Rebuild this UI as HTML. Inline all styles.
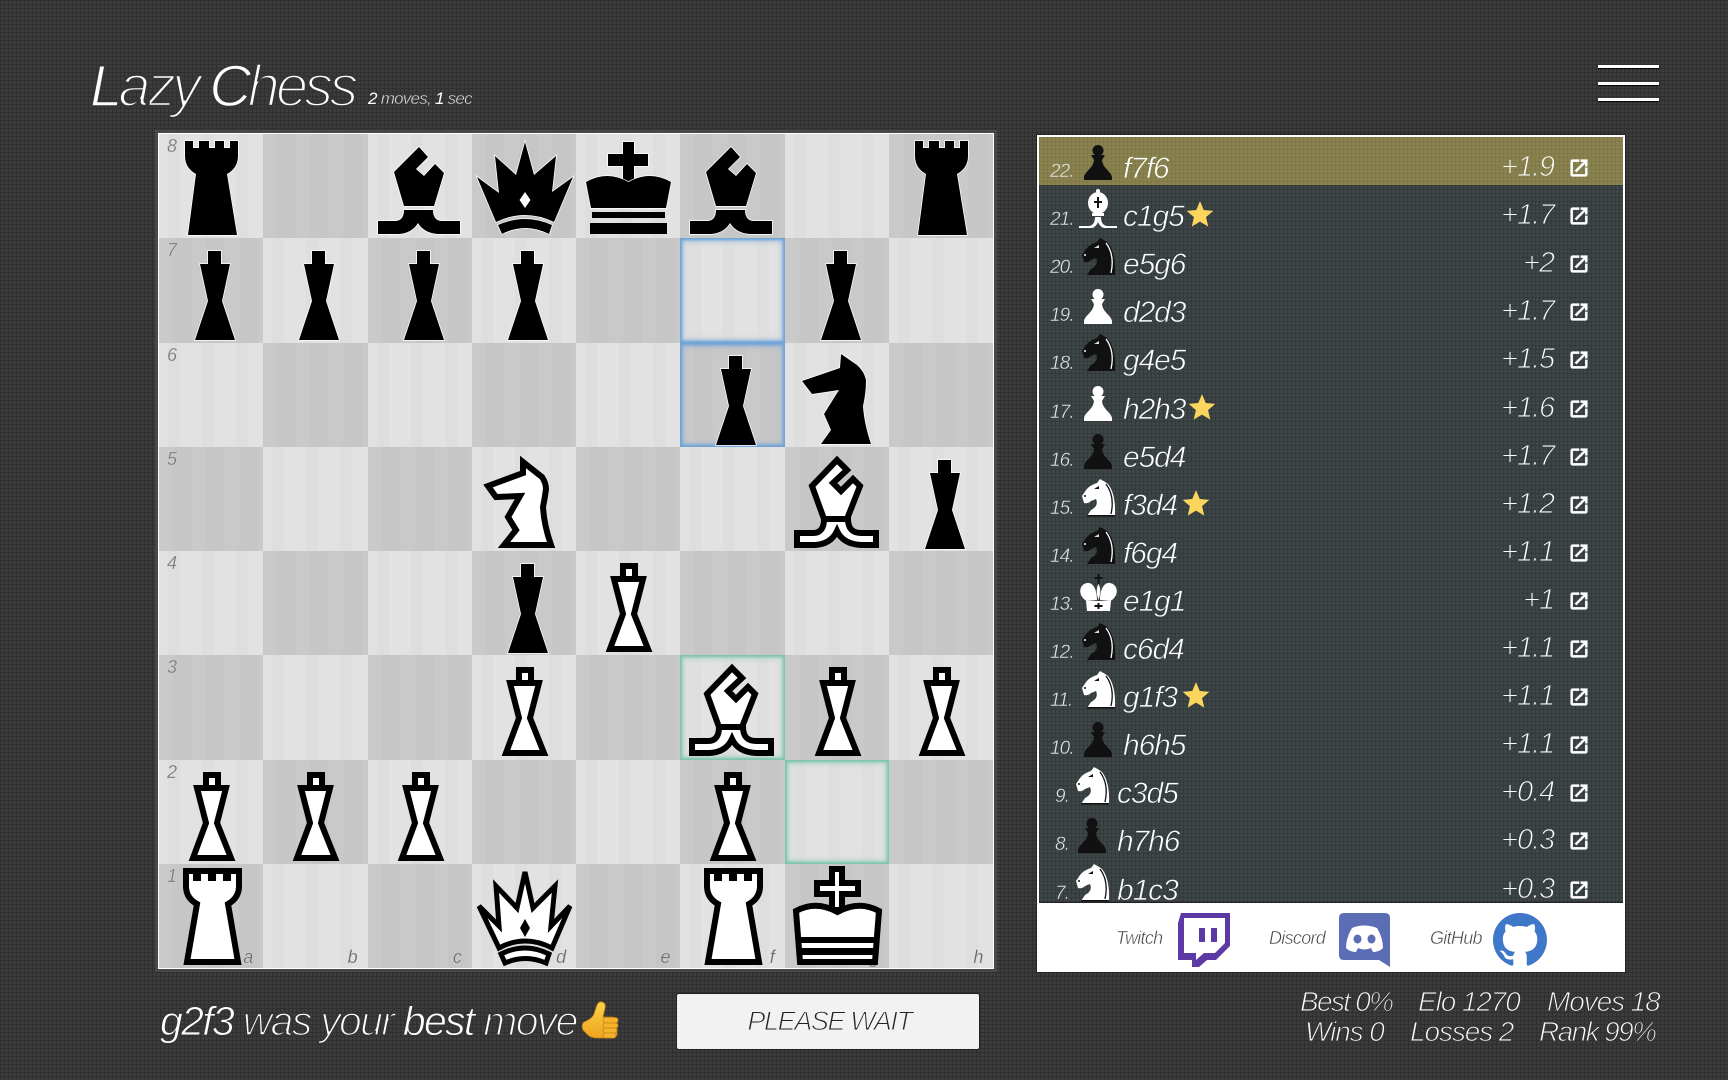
<!DOCTYPE html>
<html lang="en"><head><meta charset="utf-8"><title>Lazy Chess</title>
<style>
html,body{margin:0;padding:0;width:1728px;height:1080px;overflow:hidden}
body{position:relative;background-color:#3c3c3c;background-image:linear-gradient(#2f2f2f 1px,transparent 1px),linear-gradient(90deg,#2f2f2f 1px,transparent 1px);background-size:4px 4px;font-family:"Liberation Sans",sans-serif;font-style:italic;color:#fff}
.a{position:absolute;white-space:nowrap}
.title{left:90px;top:55px;font-size:58px;line-height:64px;letter-spacing:-3.85px;-webkit-text-stroke:2.4px #363636}
.title b{font-weight:normal;-webkit-text-stroke:1.4px #363636}
.sub{left:368px;top:89px;font-size:17px;line-height:20px;letter-spacing:-.75px;color:#ddd;-webkit-text-stroke:.4px #363636}
.sub b{font-weight:normal;color:#fff;-webkit-text-stroke:0}
.bar{left:1598px;width:61px;height:3px;background:#fff;box-shadow:0 1px 1px #000}
#board{left:159px;top:134px;width:834.4px;height:834.4px;display:grid;grid-template-columns:repeat(8,104.3px);grid-template-rows:repeat(8,104.3px);outline:1px solid #fff;box-shadow:0 0 0 4px #484848}
.l,.d{position:relative;overflow:hidden}
.l{background:#e1e1e1 repeating-linear-gradient(90deg,rgba(255,255,255,.04) 0 9px,rgba(0,0,0,.01) 9px 21px,rgba(255,255,255,.02) 21px 34px)}
.d{background:#c8c8c8 repeating-linear-gradient(90deg,rgba(255,255,255,.02) 0 14px,rgba(0,0,0,.01) 14px 33px)}
.hb{box-shadow:inset 0 0 2px 2px #6ea3d8,inset 0 0 6px 3px rgba(110,163,216,.6)}
.ht{box-shadow:inset 0 0 2px 2px #7cc4ae,inset 0 0 6px 3px rgba(124,196,174,.55)}
.p{position:absolute;left:0;top:0;width:104px;height:104px;overflow:visible}
.rk{position:absolute;left:8px;top:-1px;font-size:18px;line-height:26px;color:#777;-webkit-text-stroke:.3px #d8d8d8}
.fl{position:absolute;right:10px;bottom:1px;font-size:18px;line-height:20px;color:#666;-webkit-text-stroke:.3px #d8d8d8}
.b{fill:#000;stroke:#fff;stroke-width:1.5;paint-order:stroke;stroke-linejoin:miter}
.w{fill:#fff;stroke:#000;stroke-width:6;stroke-linejoin:miter}
#panel{left:1037px;top:135px;width:584px;height:831px;border:2px solid #fff;border-bottom:4px solid #fff;background:#fff;box-shadow:0 0 0 1px #222}
#list{position:absolute;left:0;top:0;width:584px;height:766px;overflow:hidden;background-color:#3e4647;background-image:linear-gradient(#323a3b 1px,transparent 1px),linear-gradient(90deg,#323a3b 1px,transparent 1px);background-size:4px 4px;box-shadow:inset 0 -1px 0 #222}
.r{position:absolute;left:0;width:584px;height:48.1px}
.hl{background-color:#8a8350;background-image:linear-gradient(#807948 1px,transparent 1px),linear-gradient(90deg,#807948 1px,transparent 1px);background-size:4px 4px}
.r span,.r svg{position:absolute}
.n{left:11px;top:0;font-size:19px;line-height:70px;letter-spacing:-.9px;color:#e4e4e4;-webkit-text-stroke:.4px #3a4142}
.m{left:84px;top:0;font-size:30px;line-height:64px;letter-spacing:-1.1px;color:#fff;-webkit-text-stroke:.7px #3a4142}
.s{right:69px;top:0;font-size:29px;line-height:60px;letter-spacing:-1.1px;color:#fff;-webkit-text-stroke:1px #3a4142}
.hl .n,.hl .m,.hl .s{-webkit-text-stroke-color:#85804c}
.pc{left:39px;top:4px;width:40px;height:40px;overflow:visible}
.o .n{left:16px}.o .m{left:78px}.o .pc{left:33px}
.ic{left:529px;top:20px;width:22px;height:22px;fill:#fff;stroke:#fff;stroke-width:.7}
.st{top:15px;width:28px;height:28px;fill:#fcd55f}
.ft{top:927px;font-size:18px;line-height:22px;letter-spacing:-.7px;color:#444;-webkit-text-stroke:.45px #fff}
.stat{font-size:28px;line-height:30px;letter-spacing:-1.1px;color:#fff;-webkit-text-stroke:1px #363636}
.msg{left:160px;top:997px;font-size:41px;line-height:48px;letter-spacing:-1.7px;color:#fff;-webkit-text-stroke:1.6px #363636}
.msg b{font-weight:normal;color:#fff;-webkit-text-stroke:.9px #363636}
.btn{left:677px;top:994px;width:302px;height:55px;background:#f2f2f2;border-radius:2px;box-shadow:0 0 0 1px #222;text-align:center;text-indent:3px;color:#222;font-size:27px;line-height:55px;letter-spacing:-1.4px;-webkit-text-stroke:1px #f2f2f2}
</style></head><body>
<svg width="0" height="0" style="position:absolute">
<defs><linearGradient id="tg" x1="0" y1="0" x2="0" y2="1"><stop offset="0" stop-color="#fbd34a"/><stop offset="1" stop-color="#eea41f"/></linearGradient></defs>
<symbol id="bR" viewBox="0 0 104 104"><path class="b" d="M26,7H34V14H40V7H50V14H56V7H65V14H71V7H79V22Q79,34 68,40L78,101H29L37,40Q26,34 26,22Z"/></symbol>
<symbol id="wR" viewBox="0 0 104 104"><path class="w" d="M27,7H37V14H39V7H52V14H54V7H67V14H69V7H80V22Q80,34 69,40L79,98H28L38,40Q27,34 27,22Z"/></symbol>
<symbol id="bQ" viewBox="0 0 104 104"><path class="b" d="M53,8L62,41L84,22L80,58L101,43L82,88Q53,74 24,88L5,43L27,59L23,22L44,41Z"/><path fill="#fff" d="M53,58L58.5,66L53,74L47.500,66Z"/><path class="b" d="M26,91Q53,79 80,91L77,100Q53,88 30,100Z"/></symbol>
<symbol id="wQ" viewBox="0 0 104 104"><path class="w" style="stroke-width:5" d="M53,8L61,44L83,22L79,62L98,42L80,84Q53,70 27,84L7,42L27,62L24,22L45,44Z"/><path d="M53,55L58,64L53,73L48,64Z"/><path class="w" style="stroke-width:5" d="M29,90Q53,78 77,90L74,99Q53,90 33,99Z"/></symbol>
<symbol id="bK" viewBox="0 0 104 104"><path class="b" d="M47,8H58V20H72V32H58V46L52.5,49L47,46V32H32V20H47Z"/><path class="b" d="M10,48Q31,36 52.5,48Q74,36 95,48L90,74H15Z"/><rect x="16" y="78" width="73" height="6"/><rect x="14" y="89" width="77" height="11"/></symbol>
<symbol id="wK" viewBox="0 0 104 104"><path class="w" d="M47,5H57V19H73V30H57V46H47V30H32V19H47Z"/><path class="w" d="M11,47Q31,36 52.5,48Q74,36 94,47L90,98H15Z"/><rect x="13" y="73" width="79" height="6"/><rect x="14" y="84" width="77" height="7"/></symbol>
<symbol id="bB" viewBox="0 0 104 104"><path class="b" d="M26,38L51,13L60,23L48,35L56,42L67,30L76,39L66,72H36Z"/><path class="b" d="M10,87H28Q36,86 36,76H65Q65,86 73,87H92V100H70Q56,99 50,89Q44,99 31,100H10Z"/></symbol>
<symbol id="wB" viewBox="0 0 104 104"><path class="w" d="M39,72Q39,86 28,86H12V98H30Q46,97 52,84Q58,97 76,98H91V86H76Q63,86 63,72Z"/><path class="w" d="M27,39L52,13L62,23L48,36L56,44L68,32L75,39L62,72H39Z"/></symbol>
<symbol id="bP" viewBox="0 0 104 104"><path class="b" d="M49,13H62V26H71L63,63L76,102H36L49,63L41,26H49Z"/></symbol>
<symbol id="wP" viewBox="0 0 104 104"><path class="w" d="M47,15H59V28H47Z"/><path class="w" d="M38,28H67L58,63L72,98H34L47,63Z"/></symbol>
<symbol id="wN" viewBox="0 0 104 104"><path class="w" d="M51,15L70,30Q74,36 74,42Q73,50 71,60Q72,78 79,98H32L44,83L36,70L48,49L24,50L16,39L51,26Z"/></symbol>
<symbol id="bN" viewBox="0 0 104 104"><path class="b" d="M56,11L72,22Q79,28 81,37Q81,50 78,63Q79,80 86,101H36L46,87L39,71L54,47L27,51L17,38L55,25Z"/></symbol>
<symbol id="ip" viewBox="0 0 40 40"><circle cx="20" cy="9.500" r="5.500"/><path d="M13,14H27L24,19H16Z"/><path d="M16,18H24C24,27 33,30 34,36V39H6V36C7,30 16,27 16,18Z"/></symbol>
<symbol id="ib" viewBox="0 0 40 40"><circle cx="20" cy="2" r="2" fill="#fff"/><ellipse cx="20" cy="14" rx="10" ry="11" fill="#fff"/><path d="M19,8h2v4h3v2h-3v5h-2v-5h-3v-2h3z" fill="#111"/><path fill="#fff" d="M14,24H26V27H14Z"/><path fill="#fff" d="M1,37H11Q17,36 17,28H23Q23,36 29,37H39V39H26Q22,38 20,33Q18,38 14,39H1Z"/></symbol>
<symbol id="in" viewBox="0 0 40 40"><path d="M22,1L19,5Q12,7 8,12L4,18L6,25Q10,26 13,23L18,21Q21,28 13,32L9,38H37Q38,16 30,6Q26,3 22,1Z"/><path d="M28,6Q37,18 33,36" fill="none" stroke="#fff" stroke-width="1.300"/><circle cx="7" cy="18" r="1" fill="#fff"/><path d="M16,11L21,8L21,11Z" fill="#ddd"/></symbol>
<symbol id="iN" viewBox="0 0 40 40"><path fill="#fff" d="M22,1L19,5Q12,7 8,12L4,18L6,25Q10,26 13,23L18,21Q21,28 13,32L9,38H37Q38,16 30,6Q26,3 22,1Z"/><path d="M28,6Q37,18 33,36" fill="none" stroke="#111" stroke-width="1.300"/><circle cx="7" cy="18" r="1" fill="#111"/><path d="M16,11L21,8L21,11Z" fill="#111"/><rect x="9" y="37" width="28" height="1.500" fill="#111"/></symbol>
<symbol id="iK" viewBox="0 0 40 40"><path fill="#111" d="M19.500,0h2v3h3v2h-3v5h-2v-5h-3v-2h3z"/><path fill="#fff" d="M19,26C19,14 14,8 9,9C3,10 1,16 3,21C5,25 8,27 9,27Z"/><path fill="#fff" d="M22,26C22,14 27,8 32,9C38,10 40,16 38,21C36,25 33,27 32,27Z"/><path fill="#fff" d="M20.500,10Q24,16 20.500,26Q17,16 20.500,10Z"/><path fill="#fff" d="M8,27H33L32,37H9Z"/><path fill="#111" d="M19.500,29h2v2h3v2h-3v2h-2v-2h-3v-2h3z"/></symbol>
<symbol id="iw" viewBox="0 0 24 24"><path d="M19 19H5V5h7V3H5c-1.11 0-2 .9-2 2v14c0 1.1.89 2 2 2h14c1.1 0 2-.9 2-2v-7h-2v7zM14 3v2h3.59l-9.83 9.83 1.41 1.41L19 6.41V10h2V3h-7z"/></symbol>
<symbol id="ist" viewBox="0 0 24 24"><path d="M12,1L15.2,8.6L23.4,9.3L17.2,14.7L19.1,22.8L12,18.5L4.9,22.8L6.8,14.7L.6,9.3L8.8,8.6Z"/></symbol>
</svg>

<div class="a title"><b>L</b>azy <b>C</b>hess</div>
<div class="a sub"><b>2</b> moves, <b>1</b> sec</div>
<div class="a bar" style="top:65px"></div><div class="a bar" style="top:82px"></div><div class="a bar" style="top:98px"></div>

<div class="a" id="board">
<div class="l"><span class="rk">8</span><svg class="p"><use href="#bR"/></svg></div><div class="d"></div><div class="l"><svg class="p"><use href="#bB"/></svg></div><div class="d"><svg class="p"><use href="#bQ"/></svg></div><div class="l"><svg class="p"><use href="#bK"/></svg></div><div class="d"><svg class="p"><use href="#bB"/></svg></div><div class="l"></div><div class="d"><svg class="p"><use href="#bR"/></svg></div>
<div class="d"><span class="rk">7</span><svg class="p"><use href="#bP"/></svg></div><div class="l"><svg class="p"><use href="#bP"/></svg></div><div class="d"><svg class="p"><use href="#bP"/></svg></div><div class="l"><svg class="p"><use href="#bP"/></svg></div><div class="d"></div><div class="l hb"></div><div class="d"><svg class="p"><use href="#bP"/></svg></div><div class="l"></div>
<div class="l"><span class="rk">6</span></div><div class="d"></div><div class="l"></div><div class="d"></div><div class="l"></div><div class="d hb"><svg class="p"><use href="#bP"/></svg></div><div class="l"><svg class="p"><use href="#bN"/></svg></div><div class="d"></div>
<div class="d"><span class="rk">5</span></div><div class="l"></div><div class="d"></div><div class="l"><svg class="p"><use href="#wN"/></svg></div><div class="d"></div><div class="l"></div><div class="d"><svg class="p"><use href="#wB"/></svg></div><div class="l"><svg class="p"><use href="#bP"/></svg></div>
<div class="l"><span class="rk">4</span></div><div class="d"></div><div class="l"></div><div class="d"><svg class="p"><use href="#bP"/></svg></div><div class="l"><svg class="p"><use href="#wP"/></svg></div><div class="d"></div><div class="l"></div><div class="d"></div>
<div class="d"><span class="rk">3</span></div><div class="l"></div><div class="d"></div><div class="l"><svg class="p"><use href="#wP"/></svg></div><div class="d"></div><div class="l ht"><svg class="p"><use href="#wB"/></svg></div><div class="d"><svg class="p"><use href="#wP"/></svg></div><div class="l"><svg class="p"><use href="#wP"/></svg></div>
<div class="l"><span class="rk">2</span><svg class="p"><use href="#wP"/></svg></div><div class="d"><svg class="p"><use href="#wP"/></svg></div><div class="l"><svg class="p"><use href="#wP"/></svg></div><div class="d"></div><div class="l"></div><div class="d"><svg class="p"><use href="#wP"/></svg></div><div class="l ht"></div><div class="d"></div>
<div class="d"><span class="rk">1</span><span class="fl">a</span><svg class="p"><use href="#wR"/></svg></div><div class="l"><span class="fl">b</span></div><div class="d"><span class="fl">c</span></div><div class="l"><span class="fl">d</span><svg class="p"><use href="#wQ"/></svg></div><div class="d"><span class="fl">e</span></div><div class="l"><span class="fl">f</span><svg class="p"><use href="#wR"/></svg></div><div class="d"><span class="fl">g</span><svg class="p"><use href="#wK"/></svg></div><div class="l"><span class="fl">h</span></div>
</div>

<div class="a" id="panel">
<div id="list">
<div class="r hl" style="top:0"><span class="n">22.</span><svg class="pc" fill="#111"><use href="#ip"/></svg><span class="m">f7f6</span><span class="s">+1.9</span><svg class="ic"><use href="#iw"/></svg></div>
<div class="r" style="top:48.1px"><span class="n">21.</span><svg class="pc"><use href="#ib"/></svg><span class="m">c1g5</span><svg class="st" style="left:147px"><use href="#ist"/></svg><span class="s">+1.7</span><svg class="ic"><use href="#iw"/></svg></div>
<div class="r" style="top:96.2px"><span class="n">20.</span><svg class="pc" fill="#111"><use href="#in"/></svg><span class="m">e5g6</span><span class="s">+2</span><svg class="ic"><use href="#iw"/></svg></div>
<div class="r" style="top:144.3px"><span class="n">19.</span><svg class="pc" fill="#fff"><use href="#ip"/></svg><span class="m">d2d3</span><span class="s">+1.7</span><svg class="ic"><use href="#iw"/></svg></div>
<div class="r" style="top:192.4px"><span class="n">18.</span><svg class="pc" fill="#111"><use href="#in"/></svg><span class="m">g4e5</span><span class="s">+1.5</span><svg class="ic"><use href="#iw"/></svg></div>
<div class="r" style="top:240.5px"><span class="n">17.</span><svg class="pc" fill="#fff"><use href="#ip"/></svg><span class="m">h2h3</span><svg class="st" style="left:149px"><use href="#ist"/></svg><span class="s">+1.6</span><svg class="ic"><use href="#iw"/></svg></div>
<div class="r" style="top:288.6px"><span class="n">16.</span><svg class="pc" fill="#111"><use href="#ip"/></svg><span class="m">e5d4</span><span class="s">+1.7</span><svg class="ic"><use href="#iw"/></svg></div>
<div class="r" style="top:336.7px"><span class="n">15.</span><svg class="pc"><use href="#iN"/></svg><span class="m">f3d4</span><svg class="st" style="left:143px"><use href="#ist"/></svg><span class="s">+1.2</span><svg class="ic"><use href="#iw"/></svg></div>
<div class="r" style="top:384.8px"><span class="n">14.</span><svg class="pc" fill="#111"><use href="#in"/></svg><span class="m">f6g4</span><span class="s">+1.1</span><svg class="ic"><use href="#iw"/></svg></div>
<div class="r" style="top:432.9px"><span class="n">13.</span><svg class="pc"><use href="#iK"/></svg><span class="m">e1g1</span><span class="s">+1</span><svg class="ic"><use href="#iw"/></svg></div>
<div class="r" style="top:481px"><span class="n">12.</span><svg class="pc" fill="#111"><use href="#in"/></svg><span class="m">c6d4</span><span class="s">+1.1</span><svg class="ic"><use href="#iw"/></svg></div>
<div class="r" style="top:529.1px"><span class="n">11.</span><svg class="pc"><use href="#iN"/></svg><span class="m">g1f3</span><svg class="st" style="left:143px"><use href="#ist"/></svg><span class="s">+1.1</span><svg class="ic"><use href="#iw"/></svg></div>
<div class="r" style="top:577.2px"><span class="n">10.</span><svg class="pc" fill="#111"><use href="#ip"/></svg><span class="m">h6h5</span><span class="s">+1.1</span><svg class="ic"><use href="#iw"/></svg></div>
<div class="r o" style="top:625.3px"><span class="n">9.</span><svg class="pc"><use href="#iN"/></svg><span class="m">c3d5</span><span class="s">+0.4</span><svg class="ic"><use href="#iw"/></svg></div>
<div class="r o" style="top:673.4px"><span class="n">8.</span><svg class="pc" fill="#111"><use href="#ip"/></svg><span class="m">h7h6</span><span class="s">+0.3</span><svg class="ic"><use href="#iw"/></svg></div>
<div class="r o" style="top:721.5px"><span class="n">7.</span><svg class="pc"><use href="#iN"/></svg><span class="m">b1c3</span><span class="s">+0.3</span><svg class="ic"><use href="#iw"/></svg></div>
</div>
</div>

<div class="a ft" style="left:1116px">Twitch</div>
<svg class="a" style="left:1178px;top:913px" width="53" height="54" viewBox="0 0 53 54"><path fill="#5b3aa6" d="M3,0L0,10V47H14V54H21L29,47H38L52,33V0Z"/><path fill="#fff" d="M6,5H47V30L37,40H26L18,47V40H6Z"/><rect x="21" y="15" width="6" height="14" fill="#5b3aa6"/><rect x="33" y="15" width="6" height="14" fill="#5b3aa6"/></svg>
<div class="a ft" style="left:1269px">Discord</div>
<svg class="a" style="left:1339px;top:913px" width="51" height="54" viewBox="0 0 51 54"><path fill="#5a6db5" d="M5,0H46Q51,0 51,5V54L40,47H5Q0,47 0,42V5Q0,0 5,0Z"/><path fill="#fff" d="M13,15Q25,10 38,15Q44,25 44,35Q40,39 34,39L32,35Q25,38 19,35L17,39Q11,39 7,35Q7,25 13,15Z"/><ellipse cx="18.500" cy="26" rx="4" ry="4.500" fill="#5a6db5"/><ellipse cx="32.500" cy="26" rx="4" ry="4.500" fill="#5a6db5"/></svg>
<div class="a ft" style="left:1430px">GitHub</div>
<svg class="a" style="left:1493px;top:913px" width="54" height="54" viewBox="0 0 16 16"><path fill="#3f78c8" fill-rule="evenodd" d="M8 0C3.58 0 0 3.58 0 8c0 3.54 2.29 6.53 5.47 7.59.4.07.55-.17.55-.38 0-.19-.01-.82-.01-1.49-2.01.37-2.53-.49-2.69-.94-.09-.23-.48-.94-.82-1.13-.28-.15-.68-.52-.01-.53.63-.01 1.08.58 1.23.82.72 1.21 1.87.87 2.33.66.07-.52.28-.87.51-1.07-1.78-.2-3.64-.89-3.64-3.95 0-.87.31-1.59.82-2.15-.08-.2-.36-1.02.08-2.12 0 0 .67-.21 2.2.82.64-.18 1.32-.27 2-.27s1.36.09 2 .27c1.53-1.04 2.2-.82 2.2-.82.44 1.1.16 1.92.08 2.12.51.56.82 1.27.82 2.15 0 3.07-1.87 3.75-3.65 3.95.29.25.54.73.54 1.48 0 1.07-.01 1.93-.01 2.2 0 .21.15.46.55.38A8.013 8.013 0 0016 8c0-4.42-3.58-8-8-8z"/></svg>

<div class="a msg"><b>g2f3</b> was your <b>best</b> move</div>
<svg class="a" style="left:582px;top:1002px;overflow:visible" width="37" height="38" viewBox="0 0 37 38"><path fill="url(#tg)" stroke="#c98118" stroke-width=".8" d="M15,3Q17,-1 20,0Q24,1 23,6L21,15H31Q36,16 35,20L35,31Q35,36 30,36H16Q9,36 6,33L1,28Q-1,23 2,20Q10,17 12,12Z"/><g fill="#f6b42c" stroke="#c98118" stroke-width=".8"><rect x="21" y="15.500" width="15" height="5.500" rx="2.700"/><rect x="21" y="21" width="15" height="5" rx="2.500"/><rect x="21" y="26" width="14" height="5" rx="2.500"/><rect x="21" y="31" width="13" height="5" rx="2.500"/></g></svg>
<div class="a btn">PLEASE WAIT</div>

<div class="a stat" style="left:1300px;top:987px;letter-spacing:-1.7px">Best 0%</div>
<div class="a stat" style="left:1418px;top:987px">Elo 1270</div>
<div class="a stat" style="left:1547px;top:987px">Moves 18</div>
<div class="a stat" style="left:1305px;top:1017px">Wins 0</div>
<div class="a stat" style="left:1410px;top:1017px">Losses 2</div>
<div class="a stat" style="left:1539px;top:1017px;letter-spacing:-1.6px">Rank 99%</div>
</body></html>
